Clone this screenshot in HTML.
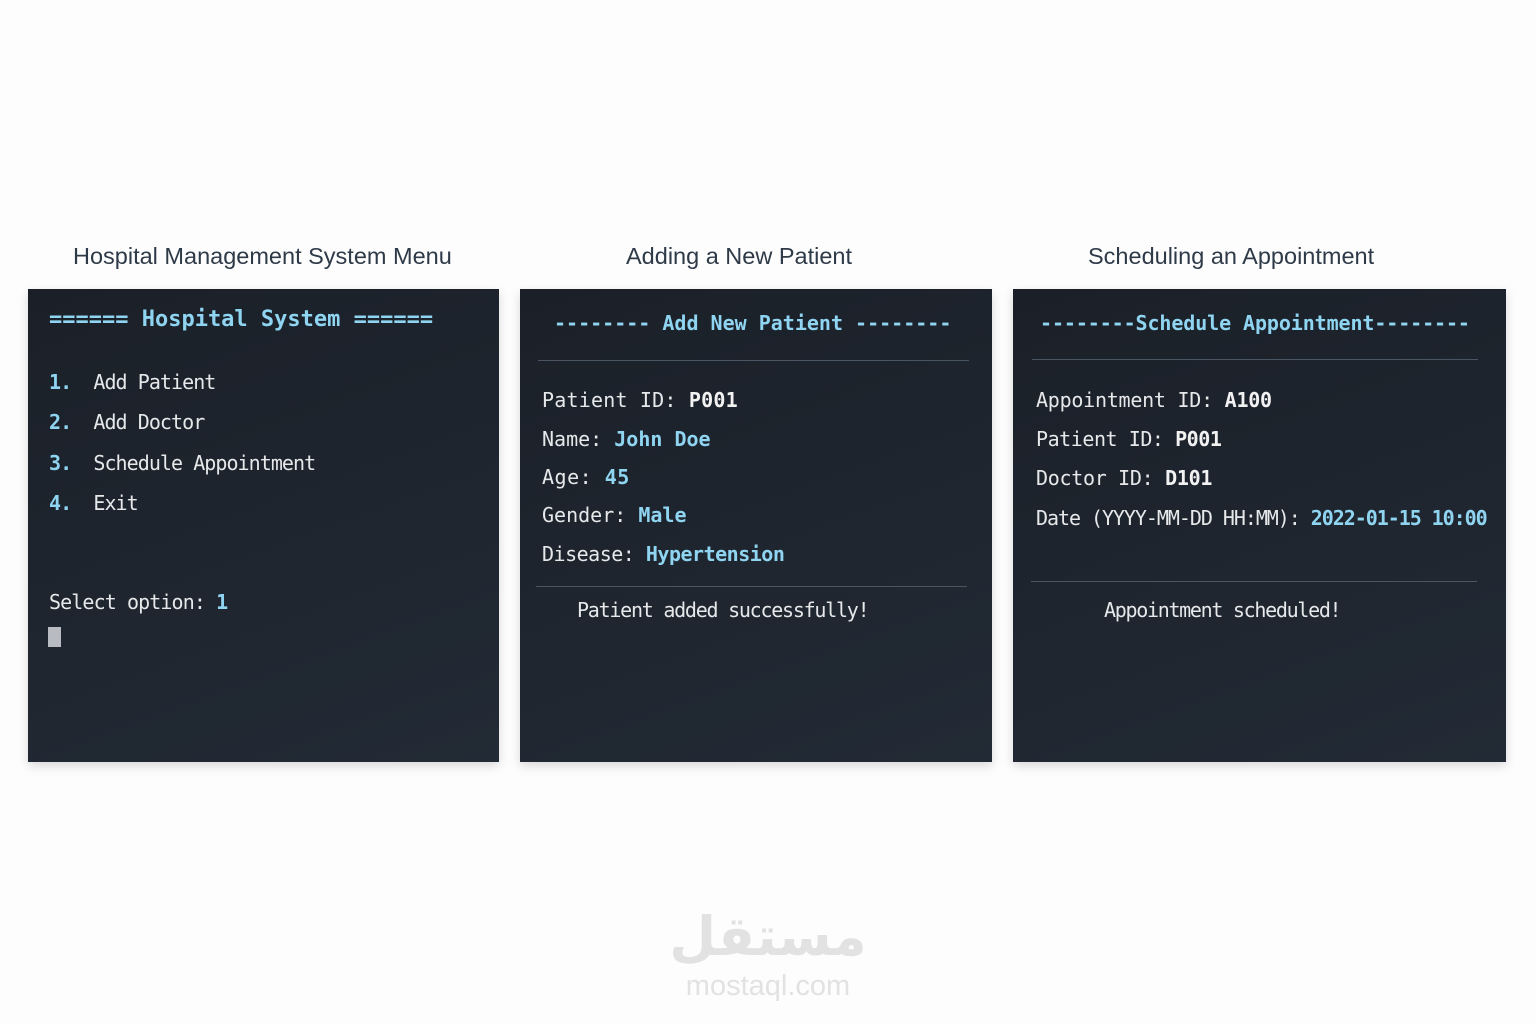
<!DOCTYPE html>
<html><head><meta charset="utf-8"><style>
body{margin:0;width:1536px;height:1024px;background:#fdfdfd;position:relative;overflow:hidden;font-family:"DejaVu Sans Mono","Liberation Mono",monospace}
.t{position:absolute;font-family:"Liberation Sans",sans-serif;font-size:23.5px;color:#2e3a48;top:243px}
.p{position:absolute;top:289px;height:473px;background:linear-gradient(160deg,#1b2028,#222a35);box-shadow:0 4px 10px rgba(0,0,0,.15)}
.l{position:absolute;font-size:20px;line-height:26px;color:#e6e8ea;white-space:pre}
.c{color:#8fd4f0;font-weight:bold}
.b{font-weight:bold;color:#f2f2f2}
.hr{position:absolute;height:1px;background:#4a5563}
</style></head><body>
<div class="t" style="left:73px">Hospital Management System Menu</div>
<div class="t" style="left:626px">Adding a New Patient</div>
<div class="t" style="left:1088px">Scheduling an Appointment</div>

<div class="p" style="left:28px;width:471px">
<div class="l c" style="left:21px;top:18px;font-size:22px">====== Hospital System ======</div>
<div class="l" style="left:21px;top:80px;letter-spacing:-0.95px"><span class="c">1.</span>  Add Patient</div>
<div class="l" style="left:21px;top:120px;letter-spacing:-0.95px"><span class="c">2.</span>  Add Doctor</div>
<div class="l" style="left:21px;top:161px;letter-spacing:-0.95px"><span class="c">3.</span>  Schedule Appointment</div>
<div class="l" style="left:21px;top:201px;letter-spacing:-0.95px"><span class="c">4.</span>  Exit</div>
<div class="l" style="left:21px;top:300px;letter-spacing:-0.9px">Select option: <span class="c">1</span></div>
<div style="position:absolute;left:20px;top:338px;width:13px;height:20px;background:#b8bcc2"></div>
</div>

<div class="p" style="left:520px;width:472px">
<div class="l c" style="left:34px;top:21px;font-size:20px">-------- Add New Patient --------</div>
<div class="hr" style="left:18px;top:71px;width:431px"></div>
<div class="l" style="left:22px;top:98px;letter-spacing:0.2px">Patient ID: <span class="b">P001</span></div>
<div class="l" style="left:22px;top:137px">Name: <span class="c">John Doe</span></div>
<div class="l" style="left:22px;top:175px;letter-spacing:0.5px">Age: <span class="c">45</span></div>
<div class="l" style="left:22px;top:213px">Gender: <span class="c">Male</span></div>
<div class="l" style="left:22px;top:252px;letter-spacing:-0.5px">Disease: <span class="c">Hypertension</span></div>
<div class="hr" style="left:16px;top:297px;width:431px"></div>
<div class="l" style="left:57px;top:308px;letter-spacing:-1.25px">Patient added successfully!</div>
</div>

<div class="p" style="left:1013px;width:493px">
<div class="l c" style="left:27px;top:21px;letter-spacing:-0.1px">--------Schedule Appointment--------</div>
<div class="hr" style="left:19px;top:70px;width:446px"></div>
<div class="l" style="left:23px;top:98px;letter-spacing:-0.25px">Appointment ID: <span class="b">A100</span></div>
<div class="l" style="left:23px;top:137px;letter-spacing:-0.45px">Patient ID: <span class="b">P001</span></div>
<div class="l" style="left:23px;top:176px;letter-spacing:-0.3px">Doctor ID: <span class="b">D101</span></div>
<div class="l" style="left:23px;top:216px;letter-spacing:-1.05px">Date (YYYY-MM-DD HH:MM): <span class="c">2022-01-15 10:00</span></div>
<div class="hr" style="left:18px;top:292px;width:446px"></div>
<div class="l" style="left:91px;top:308px;letter-spacing:-1.3px">Appointment scheduled!</div>
</div>

<div style="position:absolute;left:656px;top:905px;width:224px;text-align:center;font-family:'DejaVu Sans',sans-serif;font-size:54px;font-weight:bold;color:#e2e2e2;line-height:64px">مستقل</div>
<div style="position:absolute;left:656px;top:970px;width:224px;text-align:center;font-family:'Liberation Sans',sans-serif;font-size:29px;color:#e2e2e2">mostaql.com</div>
</body></html>
